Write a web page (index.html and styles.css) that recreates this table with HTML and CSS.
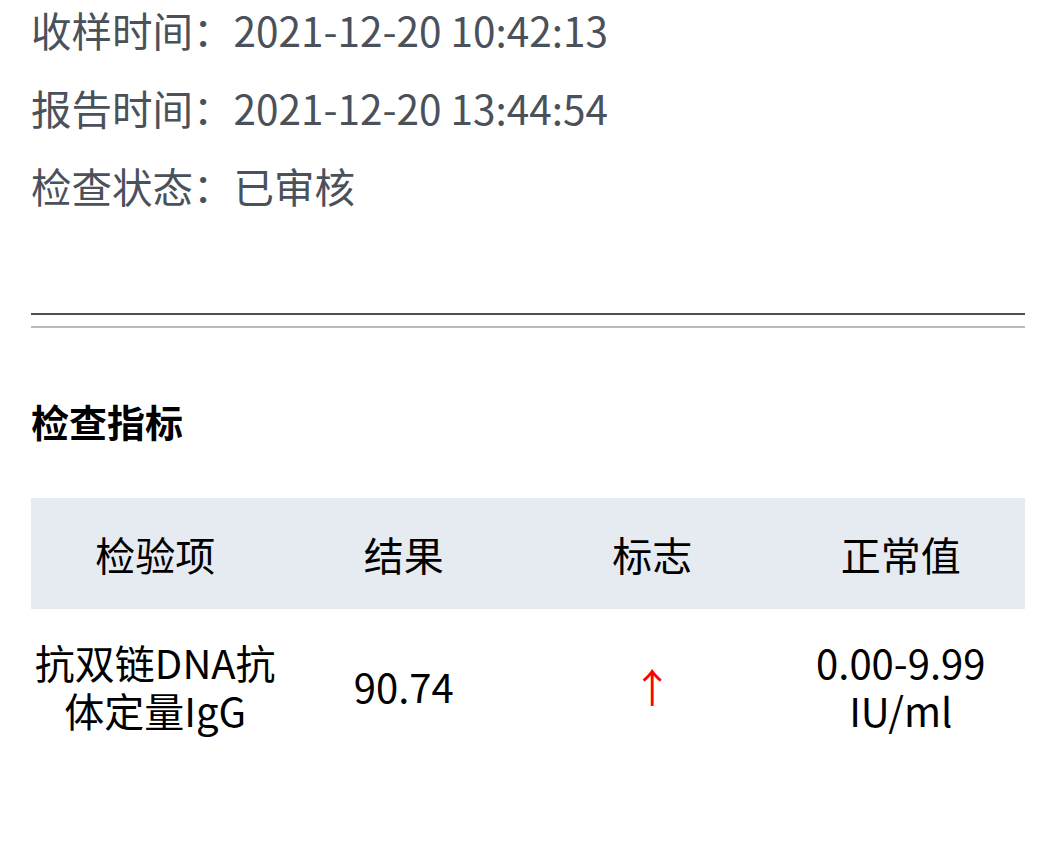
FILE: index.html
```html
<!DOCTYPE html>
<html lang="zh-CN">
<head>
    <meta charset="UTF-8">
    <meta name="viewport" content="width=device-width, initial-scale=1.0">
    <title>检验报告</title>
    <link rel="stylesheet" href="styles.css">
</head>
<body>
    <div class="page">
        <!-- Report Info -->
        <section class="info">
            <p class="info-row"><span class="info-label">收样时间：</span>2021-12-20 10:42:13</p>
            <p class="info-row"><span class="info-label">报告时间：</span>2021-12-20 13:44:54</p>
            <p class="info-row"><span class="info-label">检查状态：</span>已审核</p>
        </section>

        <div class="divider-dark"></div>
        <div class="divider-light"></div>

        <!-- Results -->
        <h2 class="section-title">检查指标</h2>
        <table class="result-table">
            <thead>
                <tr>
                    <th>检验项</th>
                    <th>结果</th>
                    <th>标志</th>
                    <th>正常值</th>
                </tr>
            </thead>
            <tbody>
                <tr>
                    <td>抗双链DNA抗体定量IgG</td>
                    <td>90.74</td>
                    <td class="flag-up">↑</td>
                    <td>0.00-9.99 IU/ml</td>
                </tr>
            </tbody>
        </table>
    </div>
</body>
</html>
```

FILE: styles.css
```css
:root {
    --info-text: #4b515b;
    --line-dark: #4a4f58;
    --line-light: #b9bbbe;
    --header-bg: #e6eaf1;
    --flag-red: #ff0000;
}

* {
    margin: 0;
    padding: 0;
    box-sizing: border-box;
}

body {
    font-family: "Noto Sans CJK SC", "Noto Sans", sans-serif;
    background: #ffffff;
    color: #000000;
}

.page {
    padding: 1px 18px 0 31px;
}

/* Report Info */
.info-row {
    font-size: 40.5px;
    line-height: 58px;
    color: var(--info-text);
    margin-bottom: 20px;
}

.info-row:last-child {
    margin-bottom: 0;
}

/* Dividers */
.divider-dark {
    height: 2px;
    background: var(--line-dark);
    margin-top: 98px;
}

.divider-light {
    height: 2px;
    background: var(--line-light);
    margin-top: 11px;
}

/* Section title */
.section-title {
    font-size: 38px;
    font-weight: bold;
    line-height: 56px;
    margin-top: 65px;
    margin-bottom: 49px;
}

/* Result table */
.result-table {
    width: 100%;
    border-collapse: collapse;
    table-layout: fixed;
    font-size: 40px;
}

.result-table th {
    background: var(--header-bg);
    font-weight: normal;
    height: 111px;
    line-height: 48px;
    text-align: center;
    vertical-align: middle;
}

.result-table td {
    padding: 29px 2px 35px;
    line-height: 48px;
    text-align: center;
    vertical-align: middle;
}

.flag-up {
    color: var(--flag-red);
}
```
